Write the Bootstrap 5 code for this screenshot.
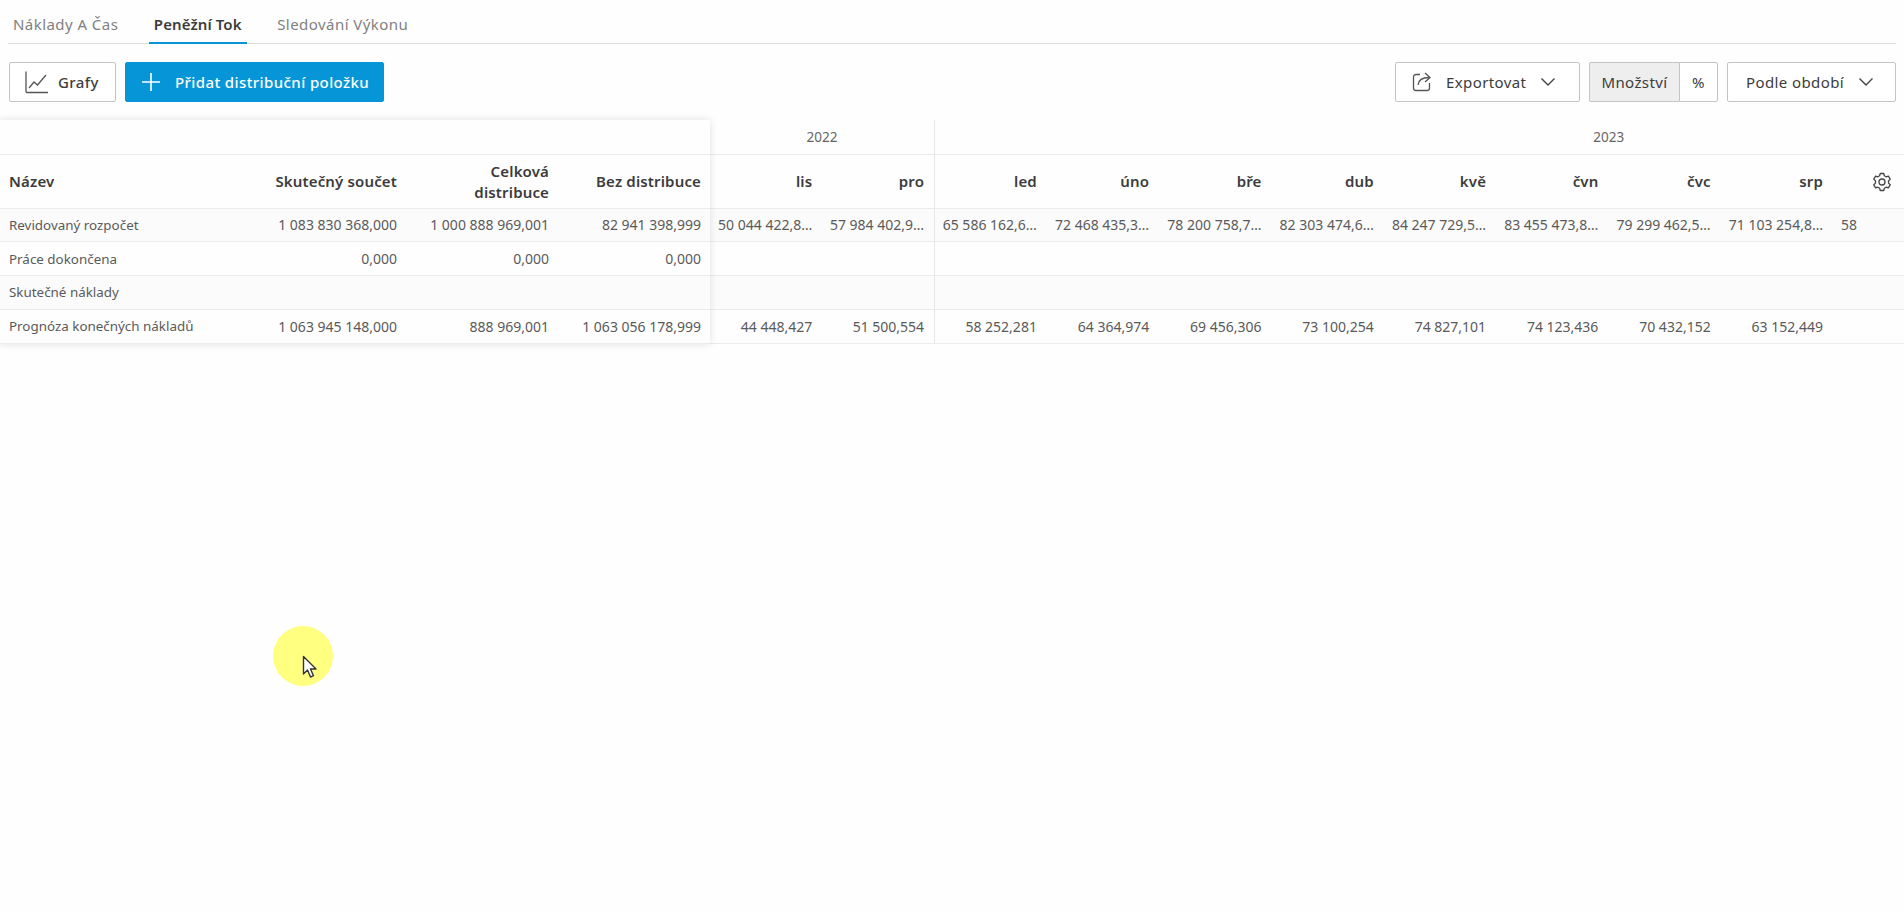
<!DOCTYPE html>
<html lang="cs">
<head>
<meta charset="utf-8">
<title>Peněžní tok</title>
<link href="https://cdn.jsdelivr.net/npm/bootstrap@5.3.0/dist/css/bootstrap.min.css" rel="stylesheet">
<style>
html,body{height:100%;}
body{background:#fefefe;font-family:"Noto Sans","Liberation Sans",sans-serif;font-size:13px;color:#555;overflow:hidden;position:relative;}
.tabbar{margin:0 8px;height:44px;border-bottom:1px solid #dcdcdc;gap:0;}
.tabbar .nav-link{padding:0 5px;margin-right:25.5px;height:44px;line-height:49px;font-size:15px;letter-spacing:.45px;color:#808080;background:none;border:0;border-bottom:2px solid transparent;border-radius:0;}
.tabbar .nav-link.active{color:#3c3c3c;font-weight:600;letter-spacing:.1px;border-bottom-color:#0696d7;}
.toolbar{padding:18px 8px 18px 9px;height:76px;}
.tool{height:40px;border-radius:2px;border:1px solid #c4c4c4;background:#fff;color:#3c3c3c;font-size:15px;letter-spacing:.4px;font-weight:400;display:inline-flex;align-items:center;padding:0;}
.tool:hover{background:#fff;color:#3c3c3c;border-color:#c4c4c4;}
.lgroup{gap:9px;}
.t-graf{width:107px;padding-left:14px;gap:10px;font-weight:500;}
.t-add{width:259px;padding-left:16px;gap:15px;background:#0696d7;border-color:#0696d7;color:#fff;font-weight:500;}
.t-add:hover{background:#0696d7;border-color:#0696d7;color:#fff;}
.t-exp{width:185px;padding-left:16px;gap:14px;}
.t-per{width:169px;padding-left:18px;gap:14px;}
.t-seg{display:flex;}
.t-seg .tool{justify-content:center;border-radius:0;}
.t-mn{width:91px;background:#eeeeee;border-radius:2px 0 0 2px!important;}
.t-mn:hover{background:#eeeeee;}
.t-pc{width:39px;margin-left:-1px;border-radius:0 2px 2px 0!important;}
.gridwrap{display:flex;width:100%;}
.frozen{width:710px;flex:none;box-shadow:0 0 8px rgba(0,0,0,.12);position:relative;z-index:2;background:#fefefe;}
.scroller{flex:1;overflow:hidden;position:relative;}
.dtable{table-layout:fixed;margin:0;border-collapse:collapse;font-size:14px;--bs-table-bg:transparent;}
.dtable th,.dtable td{padding:0 9px;border-bottom:1px solid #ebebeb;border-top:0;color:#5a5a5a;font-weight:400;vertical-align:middle;white-space:nowrap;overflow:hidden;text-align:right;box-shadow:none;}
.ftable{width:710px;}
.stable{width:1572px;}
.c-name{width:254px;}
.c-num{width:152px;}
.c-m{width:112.3px;}
.r-year{height:34px;}
.r-head{height:54px;}
.r-data{height:33.75px;}
.dtable .r-head th{font-weight:600;color:#3c3c3c;font-size:15px;letter-spacing:.15px;white-space:normal;line-height:21px;padding-top:1px;}
.dtable .r-year th{text-align:center;font-size:13.5px;color:#666;padding:0;}
.dtable td.txt{text-align:left;font-size:13.4px;}
.dtable .r-alt td{background:#fbfbfb;}
.dtable .sep{border-right:1px solid #e6e6e6;}
.stable td,.stable .r-head th{padding-right:10px;padding-left:6px;}
.stable td.txt{font-size:14px;padding-left:8px;}
.gearicon{left:1872px;top:172px;}
.spot{position:absolute;left:273px;top:626px;width:60px;height:60px;border-radius:50%;background:#ffff80;}
.arrow{position:absolute;left:302px;top:655px;}
</style>
</head>
<body>
<ul class="nav tabbar">
<li class="nav-item"><a class="nav-link" href="#">Náklady A Čas</a></li>
<li class="nav-item"><a class="nav-link active" href="#">Peněžní Tok</a></li>
<li class="nav-item"><a class="nav-link" href="#">Sledování Výkonu</a></li>
</ul>
<div class="toolbar d-flex justify-content-between">
<div class="d-flex lgroup">
<button class="btn tool t-graf"><svg width="24" height="24" viewBox="0 0 24 24" fill="none" stroke="#555" stroke-width="1.3"><path d="M2 1.500V21.500a1 1 0 0 0 1 1H24"/><path d="M5 18l5-6 3.500 3L22 5"/></svg>Grafy</button>
<button class="btn tool t-add"><svg width="18" height="18" viewBox="0 0 18 18" stroke="#fff" stroke-width="1.6"><path d="M9 0V18M0 9H18"/></svg>Přidat distribuční položku</button>
</div>
<div class="d-flex lgroup">
<button class="btn tool t-exp"><svg width="20" height="20" viewBox="0 0 20 20" fill="none" stroke="#555" stroke-width="1.3"><path d="M8 2.500H4a2.500 2.500 0 0 0-2.500 2.500V16A2.500 2.500 0 0 0 4 18.500H15a2.500 2.500 0 0 0 2.500-2.500V11"/><path d="M6 13c.5-5 4-7.500 11-7.500"/><path d="M13 1l5 4.500-5 4.500"/></svg>Exportovat<svg width="16" height="10" viewBox="0 0 16 10" fill="none" stroke="#444" stroke-width="1.4"><path d="M1.500 1.500L8 8l6.500-6.500"/></svg></button>
<div class="t-seg"><button class="btn tool t-mn">Množství</button><button class="btn tool t-pc">%</button></div>
<button class="btn tool t-per">Podle období<svg width="16" height="10" viewBox="0 0 16 10" fill="none" stroke="#444" stroke-width="1.4"><path d="M1.500 1.500L8 8l6.500-6.500"/></svg></button>
</div>
</div>
<div class="gridwrap">
<div class="frozen">
<table class="table dtable ftable">
<colgroup><col class="c-name"><col class="c-num"><col class="c-num"><col class="c-num"></colgroup>
<tbody>
<tr class="r-year"><th colspan="4"></th></tr>
<tr class="r-head"><th class="txt text-start">Název</th><th>Skutečný součet</th><th>Celková<br>distribuce</th><th>Bez distribuce</th></tr>
<tr class="r-data r-alt"><td class="txt">Revidovaný rozpočet</td><td>1 083 830 368,000</td><td>1 000 888 969,001</td><td>82 941 398,999</td></tr>
<tr class="r-data"><td class="txt">Práce dokončena</td><td>0,000</td><td>0,000</td><td>0,000</td></tr>
<tr class="r-data r-alt"><td class="txt">Skutečné náklady</td><td></td><td></td><td></td></tr>
<tr class="r-data"><td class="txt">Prognóza konečných nákladů</td><td>1 063 945 148,000</td><td>888 969,001</td><td>1 063 056 178,999</td></tr>
</tbody>
</table>
</div>
<div class="scroller">
<table class="table dtable stable">
<colgroup><col class="c-m"><col class="c-m"><col class="c-m"><col class="c-m"><col class="c-m"><col class="c-m"><col class="c-m"><col class="c-m"><col class="c-m"><col class="c-m"><col class="c-m"><col class="c-m"><col class="c-m"><col class="c-m"></colgroup>
<tbody>
<tr class="r-year"><th colspan="2" class="sep">2022</th><th colspan="12">2023</th></tr>
<tr class="r-head"><th>lis</th><th class="sep">pro</th><th>led</th><th>úno</th><th>bře</th><th>dub</th><th>kvě</th><th>čvn</th><th>čvc</th><th>srp</th><th></th><th></th><th></th><th></th></tr>
<tr class="r-data r-alt"><td>50 044 422,8…</td><td class="sep">57 984 402,9…</td><td>65 586 162,6…</td><td>72 468 435,3…</td><td>78 200 758,7…</td><td>82 303 474,6…</td><td>84 247 729,5…</td><td>83 455 473,8…</td><td>79 299 462,5…</td><td>71 103 254,8…</td><td class="txt">58</td><td></td><td></td><td></td></tr>
<tr class="r-data"><td></td><td class="sep"></td><td></td><td></td><td></td><td></td><td></td><td></td><td></td><td></td><td></td><td></td><td></td><td></td></tr>
<tr class="r-data r-alt"><td></td><td class="sep"></td><td></td><td></td><td></td><td></td><td></td><td></td><td></td><td></td><td></td><td></td><td></td><td></td></tr>
<tr class="r-data"><td>44 448,427</td><td class="sep">51 500,554</td><td>58 252,281</td><td>64 364,974</td><td>69 456,306</td><td>73 100,254</td><td>74 827,101</td><td>74 123,436</td><td>70 432,152</td><td>63 152,449</td><td></td><td></td><td></td><td></td></tr>
</tbody>
</table>
</div>
</div>
<svg class="position-absolute gearicon" width="20" height="20" viewBox="0 0 20 20" fill="none" stroke="#444" stroke-width="1.3"><path d="M8.200 1.500h3.600l.6 2.300 1.700 1 2.300-.7 1.800 3.100-1.700 1.700v2.200l1.700 1.700-1.800 3.100-2.300-.7-1.700 1-.6 2.300H8.200l-.6-2.300-1.700-1-2.300.7-1.800-3.100 1.700-1.700V8.900L1.800 7.200l1.800-3.100 2.300.7 1.700-1z" stroke-linejoin="round"/><circle cx="10" cy="10" r="3"/></svg>
<div class="spot"></div>
<svg class="arrow" width="16" height="24" viewBox="0 0 16 24"><path d="M1.500 1.500V19l4-4 3 7 3-1.300-3-6.700h5.500z" fill="#fff" stroke="#333" stroke-width="1.400" stroke-linejoin="round"/></svg>
</body>
</html>
